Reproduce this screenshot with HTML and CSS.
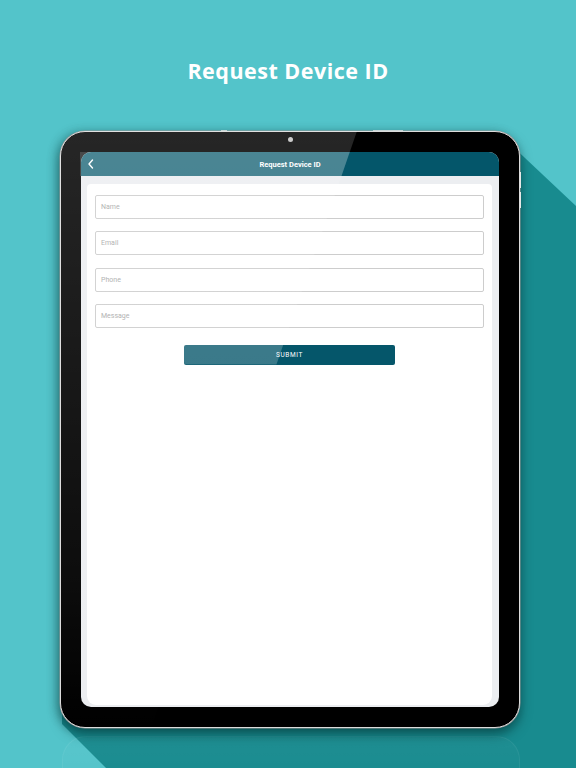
FILE: index.html
```html
<!DOCTYPE html>
<html>
<head>
<meta charset="utf-8">
<link rel="stylesheet" href="styles.css">
</head>
<body>
<svg class="backdrop" width="576" height="768" viewBox="0 0 576 768">
  <polygon points="300,140 506,140 576,206 576,768 106,768 62,724 62,300" fill="#188b8f"/>
</svg>
<h1 class="page-title">Request Device ID</h1>
<div class="device">
  <span class="cam"></span>
  <span class="btn-top btn-top-a"></span>
  <span class="btn-top btn-top-b"></span>
  <span class="btn-side btn-side-a"></span>
  <span class="btn-side btn-side-b"></span>
  <div class="screen">
    <div class="navbar">
      <svg class="back" width="8" height="10" viewBox="0 0 8 10"><path d="M5.5 1 L2 5 L5.5 9" fill="none" stroke="#fff" stroke-width="1.4" stroke-linecap="round" stroke-linejoin="round"/></svg>
      <span class="nav-title">Request Device ID</span>
    </div>
    <div class="content">
      <div class="card">
        <div class="field"><span>Name</span></div>
        <div class="field"><span>Email</span></div>
        <div class="field"><span>Phone</span></div>
        <div class="field"><span>Message</span></div>
        <div class="submit">SUBMIT</div>
      </div>
    </div>
  </div>
  <svg class="glare" width="460" height="597" viewBox="0 0 460 597">
    <defs>
      <clipPath id="dev"><rect x="0" y="0" width="460" height="597" rx="25"/></clipPath>
      <clipPath id="hdr"><rect x="20" y="21" width="419" height="24"/></clipPath>
      <clipPath id="btn"><rect x="124" y="213" width="211" height="20" rx="2"/></clipPath>
      <linearGradient id="fade" x1="0" y1="0" x2="0" y2="1">
        <stop offset="0" stop-color="#fff" stop-opacity="0.15"/>
        <stop offset="0.75" stop-color="#fff" stop-opacity="0.05"/>
        <stop offset="1" stop-color="#fff" stop-opacity="0"/>
      </linearGradient>
    </defs>
    <g clip-path="url(#dev)">
      <polygon points="0,0 297,0 91,597 0,597" fill="url(#fade)"/>
    </g>
    <polygon points="0,0 297,0 91,597 0,597" fill="#fff" fill-opacity="0.16" clip-path="url(#hdr)"/>
    <polygon points="0,0 297,0 91,597 0,597" fill="#fff" fill-opacity="0.13" clip-path="url(#btn)"/>
  </svg>
</div>
<div class="reflection"></div>
</body>
</html>
```
FILE: styles.css
```css
html, body {
  margin: 0;
  padding: 0;
}
body {
  width: 576px;
  height: 768px;
  overflow: hidden;
  background: #53c4ca;
  position: relative;
  font-family: "Roboto", "Liberation Sans", sans-serif;
}
.backdrop {
  position: absolute;
  left: 0;
  top: 0;
}
.page-title {
  position: relative;
  margin: 56px 0 0 0;
  height: 30px;
  line-height: 30px;
  text-align: center;
  color: #fff;
  font-family: "Open Sans", sans-serif;
  font-weight: 700;
  font-size: 21.5px;
  letter-spacing: 0.5px;
}
.device {
  position: relative;
  margin: 45px 0 0 60px;
  width: 460px;
  height: 597px;
  border: 1px solid #dcdcdc;
  border-radius: 25px;
  background: #000;
  padding: 20px;
  box-sizing: border-box;
  box-shadow: 0 0 0 0.5px #9a9a9a, 0 6px 12px rgba(0, 40, 40, 0.55), -4px 0 10px rgba(0, 60, 60, 0.25);
  z-index: 2;
}
.cam {
  position: absolute;
  left: 227px;
  top: 5px;
  width: 5px;
  height: 5px;
  border-radius: 50%;
  background: #c4c4c4;
}
.btn-top {
  position: absolute;
  top: -2px;
  height: 1px;
  background: rgba(235, 235, 235, 0.7);
}
.btn-top-a { left: 160px; width: 6px; }
.btn-top-b { left: 312px; width: 30px; }
.btn-side {
  position: absolute;
  right: -2px;
  width: 1px;
  background: #e6e6e6;
}
.btn-side-a { top: 40px; height: 16px; }
.btn-side-b { top: 60px; height: 16px; }
.screen {
  width: 100%;
  height: 100%;
  border-radius: 10px;
  overflow: hidden;
  background: #eceef1;
  display: flex;
  flex-direction: column;
}
.navbar {
  height: 24px;
  flex: 0 0 24px;
  background: #04566a;
  display: flex;
  align-items: center;
  justify-content: center;
  position: relative;
}
.back {
  position: absolute;
  left: 6px;
  top: 7px;
}
.nav-title {
  color: #fff;
  font-size: 7.5px;
  font-weight: 700;
}
.content {
  flex: 1;
  display: flex;
  padding: 8px 7px 2px 6px;
}
.card {
  flex: 1;
  background: #fff;
  border-radius: 4px 4px 9px 9px;
  padding: 11px 8px;
  display: flex;
  flex-direction: column;
}
.field {
  height: 24px;
  box-sizing: border-box;
  border: 1px solid #cdcdcd;
  border-radius: 2px;
  display: flex;
  align-items: center;
  padding-left: 5px;
  margin-bottom: 12.4px;
}
.field span {
  color: #a9a9a9;
  font-size: 7px;
}
.submit {
  align-self: center;
  width: 211px;
  height: 20px;
  margin-top: 4px;
  background: #05566a;
  border-radius: 2px;
  color: #fff;
  font-size: 6.5px;
  letter-spacing: 0.6px;
  display: flex;
  align-items: center;
  justify-content: center;
}
.glare {
  position: absolute;
  left: -1px;
  top: -1px;
  pointer-events: none;
}
.reflection {
  position: absolute;
  left: 62px;
  top: 736px;
  width: 456px;
  height: 60px;
  border-radius: 24px;
  border: 1px solid rgba(255, 255, 255, 0.06);
  background: linear-gradient(rgba(255, 255, 255, 0.03), rgba(255, 255, 255, 0));
  z-index: 1;
}
```
